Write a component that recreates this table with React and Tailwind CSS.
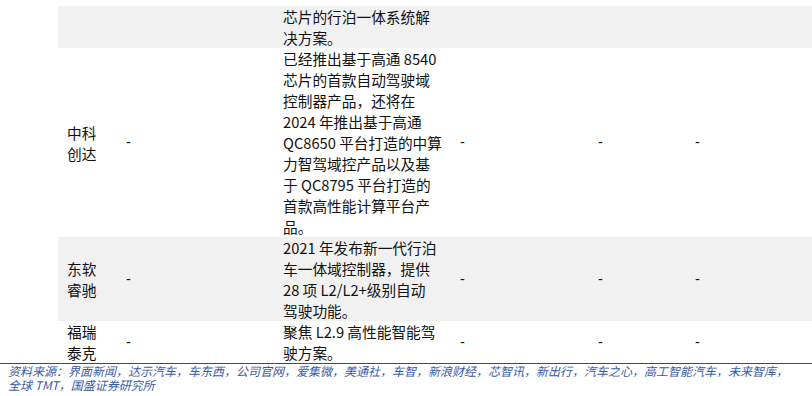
const rows = [
  {
    name: [],
    dashes: false,
    gray: true,
    desc: ["芯片的行泊一体系统解", "决方案。"],
  },
  {
    name: ["中科", "创达"],
    dashes: true,
    gray: false,
    desc: [
      "已经推出基于高通 8540",
      "芯片的首款自动驾驶域",
      "控制器产品，还将在",
      "2024 年推出基于高通",
      "QC8650 平台打造的中算",
      "力智驾域控产品以及基",
      "于 QC8795 平台打造的",
      "首款高性能计算平台产",
      "品。",
    ],
  },
  {
    name: ["东软", "睿驰"],
    dashes: true,
    gray: true,
    desc: [
      "2021 年发布新一代行泊",
      "车一体域控制器，提供",
      "28 项 L2/L2+级别自动",
      "驾驶功能。",
    ],
  },
  {
    name: ["福瑞", "泰克"],
    dashes: true,
    gray: false,
    desc: ["聚焦 L2.9 高性能智能驾", "驶方案。"],
  },
];

function Dash({ show }) {
  return (
    <div className="flex items-center pl-[8px]">
      {show && <span className="font-['Liberation_Sans'] leading-none">-</span>}
    </div>
  );
}

function Row({ row }) {
  return (
    <div
      className={`grid grid-cols-[60px_156px_178px_138px_97px_118px] ${
        row.gray ? "bg-[#f1f1f1]" : "bg-white"
      }`}
    >
      <div className="flex flex-col justify-center pl-[9px]">
        {row.name.map((n) => (
          <div key={n} className="whitespace-nowrap">
            {n}
          </div>
        ))}
      </div>
      <Dash show={row.dashes} />
      <div className="pl-[9px]">
        {row.desc.map((d, i) => (
          <div key={i} className="whitespace-nowrap">
            {d}
          </div>
        ))}
      </div>
      <Dash show={row.dashes} />
      <Dash show={row.dashes} />
      <Dash show={row.dashes} />
    </div>
  );
}

export default function App() {
  return (
    <div className="w-[812px] h-[396px] overflow-hidden bg-white font-['Noto_Sans_CJK_SC',sans-serif] text-[14.7px] leading-[21px] text-[#111]">
      <div className="pt-[6px] pl-[58px]">
        {rows.map((row, i) => (
          <Row key={i} row={row} />
        ))}
      </div>

      {/* source note */}
      <div className="border-t border-[#1f4c9e] pl-[8px] pt-[0px] text-[12px] leading-[14px] italic text-[#3a5aa6]">
        资料来源：界面新闻，达示汽车，车东西，公司官网，爱集微，美通社，车智，新浪财经，芯智讯，新出行，汽车之心，高工智能汽车，未来智库，
        <br />
        全球 TMT，国盛证券研究所
      </div>
    </div>
  );
}
